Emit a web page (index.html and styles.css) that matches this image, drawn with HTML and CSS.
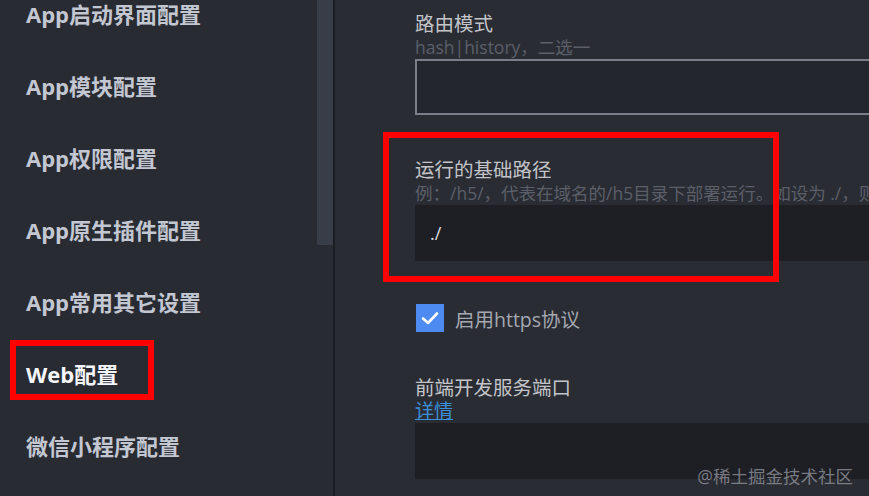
FILE: index.html
```html
<!DOCTYPE html>
<html lang="zh-CN">
<head>
<meta charset="utf-8">
<title>Web配置</title>
<link rel="stylesheet" href="styles.css">
</head>
<body>
<div class="app">
  <aside class="sidebar">
    <ul class="nav">
      <li class="nav-item">App启动界面配置</li>
      <li class="nav-item">App模块配置</li>
      <li class="nav-item">App权限配置</li>
      <li class="nav-item">App原生插件配置</li>
      <li class="nav-item">App常用其它设置</li>
      <li class="nav-item active">Web配置</li>
      <li class="nav-item">微信小程序配置</li>
    </ul>
    <div class="scrollbar"><div class="thumb"></div></div>
  </aside>
  <div class="divider"></div>
  <main class="main">
    <div class="field">
      <div class="label">路由模式</div>
      <div class="hint">hash|history，二选一</div>
      <div class="input bordered"></div>
    </div>
    <div class="field highlighted">
      <div class="label">运行的基础路径</div>
      <div class="hint clip">例：/h5/，代表在域名的/h5目录下部署运行。如设为 ./，则代表相对路径，支持本地文件打开</div>
      <div class="input filled"><span class="value">./</span></div>
    </div>
    <label class="check-row">
      <span class="checkbox">
        <svg width="18" height="14" viewBox="0 0 18 14"><path d="M2 7.5 L7 12 L16 2.5" fill="none" stroke="#fff" stroke-width="2.6" stroke-linecap="round" stroke-linejoin="round"/></svg>
      </span>
      <span class="check-text">启用https协议</span>
    </label>
    <div class="field">
      <div class="label">前端开发服务端口</div>
      <div class="link-row"><a class="link" href="#">详情</a></div>
      <div class="input filled"></div>
    </div>
    <div class="watermark">@稀土掘金技术社区</div>
  </main>
</div>
</body>
</html>
```
FILE: styles.css
```css
*, *::before, *::after { box-sizing: border-box; }
html, body {
  margin: 0;
  padding: 0;
  height: 100%;
  overflow: hidden;
  background: #2a2c34;
  font-family: "Open Sans", "Noto Sans CJK SC", sans-serif;
}
.app {
  display: flex;
  height: 496px;
  width: 869px;
  overflow: hidden;
}
.sidebar {
  width: 333px;
  flex: none;
  background: #292b33;
  display: flex;
  position: relative;
}
.nav {
  list-style: none;
  margin: -22px 0 0 0;
  padding: 0 0 0 26px;
  flex: 1;
}
.nav-item {
  height: 72px;
  line-height: 72px;
  font-size: 22px;
  font-weight: 700;
  color: #c2c7d1;
  white-space: nowrap;
  position: relative;
}
.nav-item.active { color: #f4f6fa; }
.nav-item.active::before {
  content: "";
  position: absolute;
  left: -16px;
  top: 2px;
  width: 144px;
  height: 60px;
  border: 6px solid #ff0000;
}
.scrollbar {
  width: 16px;
  flex: none;
  margin-left: auto;
}
.thumb {
  height: 245px;
  background: #393d48;
}
.divider {
  width: 2px;
  flex: none;
  background: #1b1d24;
}
.main {
  flex: 1;
  min-width: 0;
  padding: 12px 0 0 80px;
  background: #2a2c34;
  position: relative;
  overflow: hidden;
}
.field {
  margin-bottom: 43px;
  position: relative;
}
.label {
  height: 24px;
  line-height: 24px;
  font-size: 19.5px;
  color: #c2c4c8;
  white-space: nowrap;
}
.hint {
  height: 23px;
  line-height: 23px;
  font-size: 17.5px;
  color: #5b5f68;
  white-space: nowrap;
}
.hint.clip { overflow: hidden; }
.link-row {
  height: 23px;
  line-height: 23px;
}
.input {
  width: 700px;
  height: 56px;
  display: flex;
  align-items: center;
}
.input.bordered {
  background: #24262d;
  border: 2px solid #7a7e89;
}
.input.filled { background: #1e1f25; }
.value {
  padding-left: 15px;
  font-size: 18px;
  color: #d8dadf;
}
.highlighted::before {
  content: "";
  position: absolute;
  left: -32px;
  top: -26px;
  width: 396px;
  height: 150px;
  border: 6px solid #ff0000;
  pointer-events: none;
  z-index: 1;
}
.check-row {
  display: flex;
  align-items: center;
  height: 28px;
  margin-bottom: 44px;
}
.checkbox {
  width: 28px;
  height: 28px;
  margin-left: 1px;
  background: #4d8af2;
  display: flex;
  align-items: center;
  justify-content: center;
}
.check-text {
  margin-left: 11px;
  font-size: 19.5px;
  color: #a4a8b0;
}
.link {
  color: #3b8fd8;
  text-decoration: underline;
  font-size: 19px;
  line-height: 23px;
}
.watermark {
  position: absolute;
  right: 16px;
  bottom: 8px;
  font-size: 17.5px;
  color: rgba(150, 153, 160, 0.75);
  white-space: nowrap;
}
```
